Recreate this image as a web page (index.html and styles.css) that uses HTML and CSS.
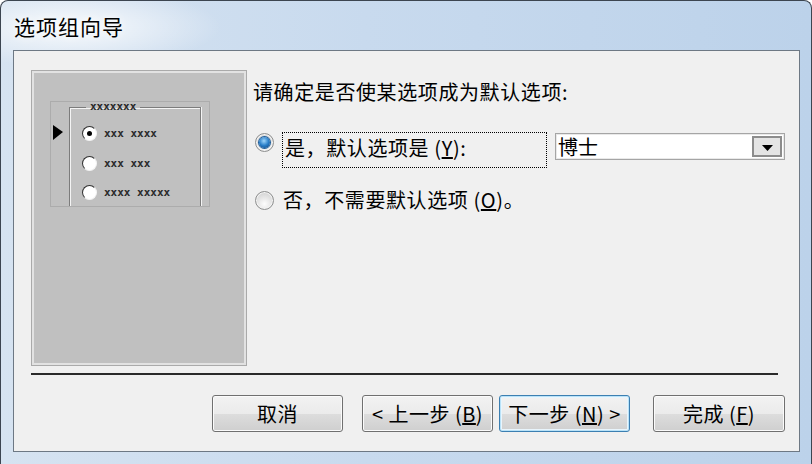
FILE: index.html
```html
<!DOCTYPE html>
<html lang="zh-CN">
<head>
  <meta charset="UTF-8">
  <title>选项组向导</title>
  <link rel="stylesheet" href="styles.css">
</head>
<body>
  <div class="window">
    <div class="titlebar">选项组向导</div>

    <div class="client">
      <div class="wizard-body">
        <div class="panel">
          <div class="mini">
            <div class="mini-arrow"></div>
            <fieldset class="mini-group">
              <legend>xxxxxxx</legend>
              <div class="mini-row"><span class="mini-radio on"></span>xxx xxxx</div>
              <div class="mini-row"><span class="mini-radio"></span>xxx xxx</div>
              <div class="mini-row"><span class="mini-radio"></span>xxxx xxxxx</div>
            </fieldset>
          </div>
        </div>

        <div class="options">
          <p class="prompt">请确定是否使某选项成为默认选项:</p>

          <div class="choice first">
            <span class="radio on"></span>
            <div class="focus-box">是，默认选项是 (<u>Y</u>):</div>
            <div class="combo">
              <span class="combo-text">博士</span>
              <span class="combo-btn">
                <svg width="11" height="6" viewBox="0 0 11 6"><path d="M0 0 H11 L5.5 6 Z" fill="#000"/></svg>
              </span>
            </div>
          </div>

          <div class="choice second">
            <span class="radio"></span>
            <div class="plain-label">否，不需要默认选项 (<u>O</u>)。</div>
          </div>
        </div>
      </div>

      <div class="separator"></div>

      <div class="buttons">
        <button class="btn cancel">取消</button>
        <button class="btn back">&lt; 上一步 (<u>B</u>)</button>
        <button class="btn next default">下一步 (<u>N</u>) &gt;</button>
        <button class="btn finish">完成 (<u>F</u>)</button>
      </div>
    </div>
  </div>
</body>
</html>
```

FILE: styles.css
```css
body {
  margin: 0;
  background: #fff;
  font-family: "Noto Sans CJK SC", "Noto Sans", sans-serif;
  color: #000;
}
.window {
  width: 812px;
  height: 464px;
  box-sizing: border-box;
  border: 1px solid #3c4550;
  border-bottom: none;
  border-radius: 8px 8px 0 0;
  padding: 0 11px 12px 12px;
  display: flex;
  flex-direction: column;
  background:
    radial-gradient(ellipse 150px 40px at 70px 26px, rgba(255, 255, 255, 0.85), rgba(255, 255, 255, 0) 100%),
    linear-gradient(to right, #d6e3f1, #c8daee 45%, #bcd2ea 100%);
}
.titlebar {
  height: 49px;
  line-height: 50px;
  padding-left: 1px;
  font-size: 21px;
  letter-spacing: 1px;
  text-shadow: 0 0 8px #fff;
}
.client {
  flex: 1;
  display: flex;
  flex-direction: column;
  background: #f0f0f0;
  border: 1px solid #6d7884;
}
.wizard-body {
  display: flex;
  padding: 19px 0 0 17px;
}

/* illustration on the left */
.panel {
  width: 216px;
  height: 296px;
  box-sizing: border-box;
  border: 1px solid #aaaaaa;
  box-shadow: inset 0 0 0 2px #e2e2e2;
  background: #c0c0c0;
  padding: 30px 0 0 18px;
}
.mini {
  width: 160px;
  height: 106px;
  box-sizing: border-box;
  border: 1px solid #acacac;
  display: flex;
  overflow: hidden;
}
.mini-arrow {
  width: 0;
  height: 0;
  margin: 23px 6px 0 2px;
  border-top: 7px solid transparent;
  border-bottom: 8px solid transparent;
  border-left: 10px solid #000;
}
.mini-group {
  margin: 0;
  padding: 14px 0 0 12px;
  width: 132px;
  height: 110px;
  box-sizing: border-box;
  border: 1px solid #7c7c7c;
  border-bottom: none;
  box-shadow: inset 1px 1px 0 #f4f4f4, 1px 0 0 #f4f4f4;
  font-family: "DejaVu Sans Mono", monospace;
  font-size: 11px;
  font-weight: bold;
  color: #2a2a2a;
  letter-spacing: 0;
}
.mini-group legend {
  margin-left: 4px;
  padding: 0 4px;
  line-height: 10px;
}
.mini-row {
  display: flex;
  align-items: center;
  height: 15px;
  margin-bottom: 14.5px;
}
.mini-radio {
  width: 13px;
  height: 13px;
  margin-right: 7px;
  border-radius: 50%;
  border: 1px solid;
  border-color: #303030 #f2f2f2 #f2f2f2 #303030;
  background: #fff;
  position: relative;
}
.mini-radio.on::after {
  content: "";
  position: absolute;
  left: 4px;
  top: 4px;
  width: 5px;
  height: 5px;
  border-radius: 50%;
  background: #000;
}

/* right side */
.options {
  margin-left: 6px;
  padding-top: 10px;
  font-size: 20px;
}
.prompt {
  margin: 0;
  line-height: 24px;
  letter-spacing: 0.6px;
}
.choice {
  display: flex;
}
.choice.first {
  margin-top: 28px;
  align-items: flex-start;
}
.choice.second {
  margin-top: 22px;
  align-items: center;
  height: 20px;
}
.radio {
  width: 19px;
  height: 19px;
  margin-left: 2px;
  box-sizing: border-box;
  border-radius: 50%;
  border: 1px solid #8e8f8f;
  background: radial-gradient(circle at 50% 70%, #fdfdfd, #d6d6d6 75%);
  box-shadow: inset 0 0 0 1px #f4f4f4;
  position: relative;
  flex: none;
}
.choice.first .radio {
  margin-top: 1px;
}
.radio.on::after {
  content: "";
  position: absolute;
  left: 3px;
  top: 3px;
  width: 11px;
  height: 11px;
  border-radius: 50%;
  background: radial-gradient(circle at 45% 35%, #9fd6fb, #2a7fc9 50%, #0b3f78 100%);
  box-shadow: 0 0 0 1px #1e5d9a;
}
.focus-box {
  width: 265px;
  height: 36px;
  box-sizing: border-box;
  margin-left: 8px;
  padding: 0 0 0 2px;
  border: 1px dotted #000;
  line-height: 30px;
  letter-spacing: 0.6px;
}
.plain-label {
  margin-left: 8px;
  padding-left: 1px;
  line-height: 20px;
  letter-spacing: 0.6px;
}
.combo {
  margin: 1px 0 0 8px;
  width: 230px;
  height: 27px;
  box-sizing: border-box;
  border: 1px solid #a5a5a5;
  box-shadow: inset 0 0 0 1px #e9e9e9;
  background: #fff;
  display: flex;
  align-items: center;
  padding: 0 2px 0 2px;
}
.combo-text {
  flex: 1;
  line-height: 24px;
}
.combo-btn {
  width: 30px;
  height: 21px;
  box-sizing: border-box;
  border: 2px solid #8c8c8c;
  background: #e4e4e4;
  display: flex;
  justify-content: center;
  align-items: flex-end;
  padding-bottom: 4px;
}

.separator {
  margin: 7px 21px 0 17px;
  height: 2px;
  background: #2a2a2a;
}

.buttons {
  display: flex;
  justify-content: flex-end;
  margin-top: 20px;
  padding-right: 14px;
}
.btn {
  width: 131px;
  height: 37px;
  padding: 0;
  font-family: "Noto Sans CJK SC", sans-serif;
  font-size: 20px;
  color: #000;
  border: 1px solid #707070;
  border-radius: 3px;
  box-shadow: inset 0 0 0 1px #fbfbfb;
  background: linear-gradient(#f2f2f2 0%, #ebebeb 50%, #dddddd 51%, #cfcfcf 100%);
  letter-spacing: 0.5px;
}
.btn.back {
  margin-left: 19px;
}
.btn.next {
  margin-left: 6px;
}
.btn.finish {
  margin-left: 23px;
  width: 132px;
}
.btn.default {
  border-color: #3c7fb1;
  box-shadow: inset 0 0 0 1px #b9e2f8, inset 0 0 0 2px #e9f5fc;
}
```
